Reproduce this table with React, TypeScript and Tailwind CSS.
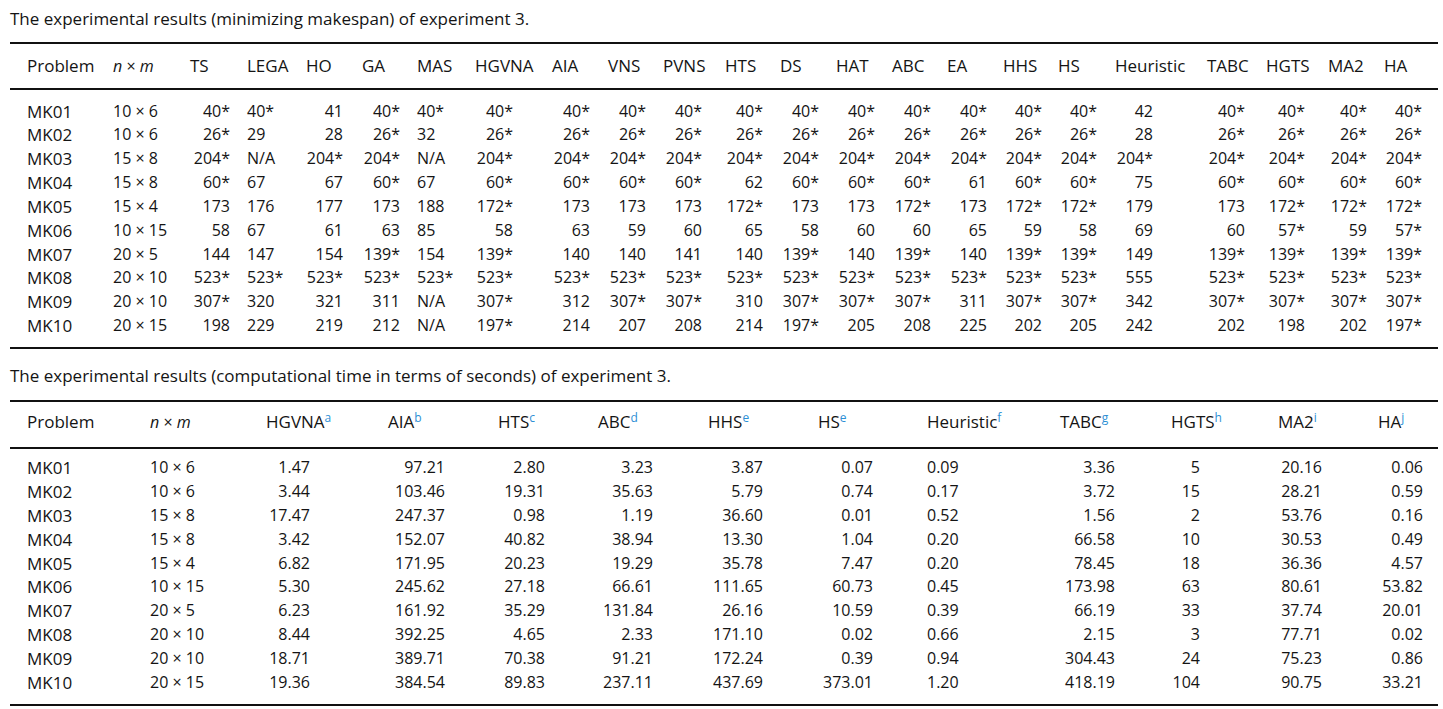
const t1Grid =
  'grid grid-cols-[86px_77px_57px_59px_56px_55px_58px_77px_56px_55px_62px_55px_56px_56px_55px_56px_55px_57px_92px_59px_62px_56px_54px]'
const t2Grid =
  'grid grid-cols-[123px_116px_122px_110px_100px_110px_110px_109px_133px_111px_107px_100px_60px]'

// header label + how the numbers in that column sit
const t1Cols = [
  { h: 'TS', cell: 'text-right pr-[17px]' },
  { h: 'LEGA', cell: 'text-left' },
  { h: 'HO', cell: 'text-right pr-[19px]' },
  { h: 'GA', cell: 'text-right pr-[17px]' },
  { h: 'MAS', cell: 'text-left' },
  { h: 'HGVNA', cell: 'text-right pr-[39px]' },
  { h: 'AIA', cell: 'text-right pr-[18px]' },
  { h: 'VNS', cell: 'text-right pr-[17px]' },
  { h: 'PVNS', cell: 'text-right pr-[23px]' },
  { h: 'HTS', cell: 'text-right pr-[17px]' },
  { h: 'DS', cell: 'text-right pr-[17px]' },
  { h: 'HAT', cell: 'text-right pr-[17px]' },
  { h: 'ABC', cell: 'text-right pr-[16px]' },
  { h: 'EA', cell: 'text-right pr-[16px]' },
  { h: 'HHS', cell: 'text-right pr-[16px]' },
  { h: 'HS', cell: 'text-right pr-[18px]' },
  { h: 'Heuristic', cell: 'text-right pr-[54px]' },
  { h: 'TABC', cell: 'text-right pr-[21px]' },
  { h: 'HGTS', cell: 'text-right pr-[23px]' },
  { h: 'MA2', cell: 'text-right pr-[17px]' },
  { h: 'HA', cell: 'text-right pr-[16px]' },
]

const t1Rows: [string, string, string[]][] = [
  ['MK01', '10 × 6', ['40*', '40*', '41', '40*', '40*', '40*', '40*', '40*', '40*', '40*', '40*', '40*', '40*', '40*', '40*', '40*', '42', '40*', '40*', '40*', '40*']],
  ['MK02', '10 × 6', ['26*', '29', '28', '26*', '32', '26*', '26*', '26*', '26*', '26*', '26*', '26*', '26*', '26*', '26*', '26*', '28', '26*', '26*', '26*', '26*']],
  ['MK03', '15 × 8', ['204*', 'N/A', '204*', '204*', 'N/A', '204*', '204*', '204*', '204*', '204*', '204*', '204*', '204*', '204*', '204*', '204*', '204*', '204*', '204*', '204*', '204*']],
  ['MK04', '15 × 8', ['60*', '67', '67', '60*', '67', '60*', '60*', '60*', '60*', '62', '60*', '60*', '60*', '61', '60*', '60*', '75', '60*', '60*', '60*', '60*']],
  ['MK05', '15 × 4', ['173', '176', '177', '173', '188', '172*', '173', '173', '173', '172*', '173', '173', '172*', '173', '172*', '172*', '179', '173', '172*', '172*', '172*']],
  ['MK06', '10 × 15', ['58', '67', '61', '63', '85', '58', '63', '59', '60', '65', '58', '60', '60', '65', '59', '58', '69', '60', '57*', '59', '57*']],
  ['MK07', '20 × 5', ['144', '147', '154', '139*', '154', '139*', '140', '140', '141', '140', '139*', '140', '139*', '140', '139*', '139*', '149', '139*', '139*', '139*', '139*']],
  ['MK08', '20 × 10', ['523*', '523*', '523*', '523*', '523*', '523*', '523*', '523*', '523*', '523*', '523*', '523*', '523*', '523*', '523*', '523*', '555', '523*', '523*', '523*', '523*']],
  ['MK09', '20 × 10', ['307*', '320', '321', '311', 'N/A', '307*', '312', '307*', '307*', '310', '307*', '307*', '307*', '311', '307*', '307*', '342', '307*', '307*', '307*', '307*']],
  ['MK10', '20 × 15', ['198', '229', '219', '212', 'N/A', '197*', '214', '207', '208', '214', '197*', '205', '208', '225', '202', '205', '242', '202', '198', '202', '197*']],
]

const t2Cols = [
  { h: 'HGVNA', note: 'a', cell: 'text-right pr-[78px]' },
  { h: 'AIA', note: 'b', cell: 'text-right pr-[53px]' },
  { h: 'HTS', note: 'c', cell: 'text-right pr-[53px]' },
  { h: 'ABC', note: 'd', cell: 'text-right pr-[55px]' },
  { h: 'HHS', note: 'e', cell: 'text-right pr-[55px]' },
  { h: 'HS', note: 'e', cell: 'text-right pr-[54px]' },
  { h: 'Heuristic', note: 'f', cell: 'text-left' },
  { h: 'TABC', note: 'g', cell: 'text-right pr-[56px]' },
  { h: 'HGTS', note: 'h', cell: 'text-right pr-[78px]' },
  { h: 'MA2', note: 'i', cell: 'text-right pr-[56px]' },
  { h: 'HA', note: 'j', cell: 'text-right pr-[15px]' },
]

const t2Rows: [string, string, string[]][] = [
  ['MK01', '10 × 6', ['1.47', '97.21', '2.80', '3.23', '3.87', '0.07', '0.09', '3.36', '5', '20.16', '0.06']],
  ['MK02', '10 × 6', ['3.44', '103.46', '19.31', '35.63', '5.79', '0.74', '0.17', '3.72', '15', '28.21', '0.59']],
  ['MK03', '15 × 8', ['17.47', '247.37', '0.98', '1.19', '36.60', '0.01', '0.52', '1.56', '2', '53.76', '0.16']],
  ['MK04', '15 × 8', ['3.42', '152.07', '40.82', '38.94', '13.30', '1.04', '0.20', '66.58', '10', '30.53', '0.49']],
  ['MK05', '15 × 4', ['6.82', '171.95', '20.23', '19.29', '35.78', '7.47', '0.20', '78.45', '18', '36.36', '4.57']],
  ['MK06', '10 × 15', ['5.30', '245.62', '27.18', '66.61', '111.65', '60.73', '0.45', '173.98', '63', '80.61', '53.82']],
  ['MK07', '20 × 5', ['6.23', '161.92', '35.29', '131.84', '26.16', '10.59', '0.39', '66.19', '33', '37.74', '20.01']],
  ['MK08', '20 × 10', ['8.44', '392.25', '4.65', '2.33', '171.10', '0.02', '0.66', '2.15', '3', '77.71', '0.02']],
  ['MK09', '20 × 10', ['18.71', '389.71', '70.38', '91.21', '172.24', '0.39', '0.94', '304.43', '24', '75.23', '0.86']],
  ['MK10', '20 × 15', ['19.36', '384.54', '89.83', '237.11', '437.69', '373.01', '1.20', '418.19', '104', '90.75', '33.21']],
]

const NxM = () => (
  <span>
    <i>n</i> × <i>m</i>
  </span>
)

export default function App() {
  return (
    <div className="w-[1443px] h-[709px] overflow-hidden bg-white pt-[7px] pl-[10px] font-['Open_Sans','Noto_Sans',sans-serif] font-medium text-[16px] text-[#141414]">
      {/* Table 1 */}
      <p className="text-[17px] leading-6">The experimental results (minimizing makespan) of experiment 3.</p>
      <div className="mt-[11px] w-[1428px] border-y-2 border-[#111]">
        <div className={`${t1Grid} pl-[17px] pt-[10px] pb-[10px] text-[17px] leading-6 border-b-2 border-[#111]`}>
          <div>Problem</div>
          <div className="text-[16px]">
            <NxM />
          </div>
          {t1Cols.map((c) => (
            <div key={c.h} className="whitespace-nowrap">
              {c.h}
            </div>
          ))}
        </div>
        <div className="pt-[9.5px] pb-[9.5px]">
          {t1Rows.map(([id, size, vals]) => (
            <div key={id} className={`${t1Grid} pl-[17px] h-[23.85px] leading-[23.85px]`}>
              <div className="text-[17px]">{id}</div>
              <div className="whitespace-nowrap">{size}</div>
              {vals.map((v, i) => (
                <div key={i} className={`whitespace-nowrap ${t1Cols[i].cell}`}>
                  {v}
                </div>
              ))}
            </div>
          ))}
        </div>
      </div>

      {/* Table 2 */}
      <p className="mt-[15px] text-[17px] leading-6">
        The experimental results (computational time in terms of seconds) of experiment 3.
      </p>
      <div className="mt-[12px] w-[1428px] border-y-2 border-[#111]">
        <div className={`${t2Grid} pl-[17px] pt-[8px] pb-[12.5px] text-[17px] leading-6 border-b-2 border-[#111]`}>
          <div>Problem</div>
          <div className="text-[16px]">
            <NxM />
          </div>
          {t2Cols.map((c) => (
            <div key={c.h} className="whitespace-nowrap">
              {c.h}
              <sup className="text-[12px] font-normal text-[#2d8fd5]">{c.note}</sup>
            </div>
          ))}
        </div>
        <div className="pt-[7.2px] pb-[9.8px]">
          {t2Rows.map(([id, size, vals]) => (
            <div key={id} className={`${t2Grid} pl-[17px] h-[23.85px] leading-[23.85px]`}>
              <div className="text-[17px]">{id}</div>
              <div className="whitespace-nowrap">{size}</div>
              {vals.map((v, i) => (
                <div key={i} className={`whitespace-nowrap ${t2Cols[i].cell}`}>
                  {v}
                </div>
              ))}
            </div>
          ))}
        </div>
      </div>
    </div>
  )
}
